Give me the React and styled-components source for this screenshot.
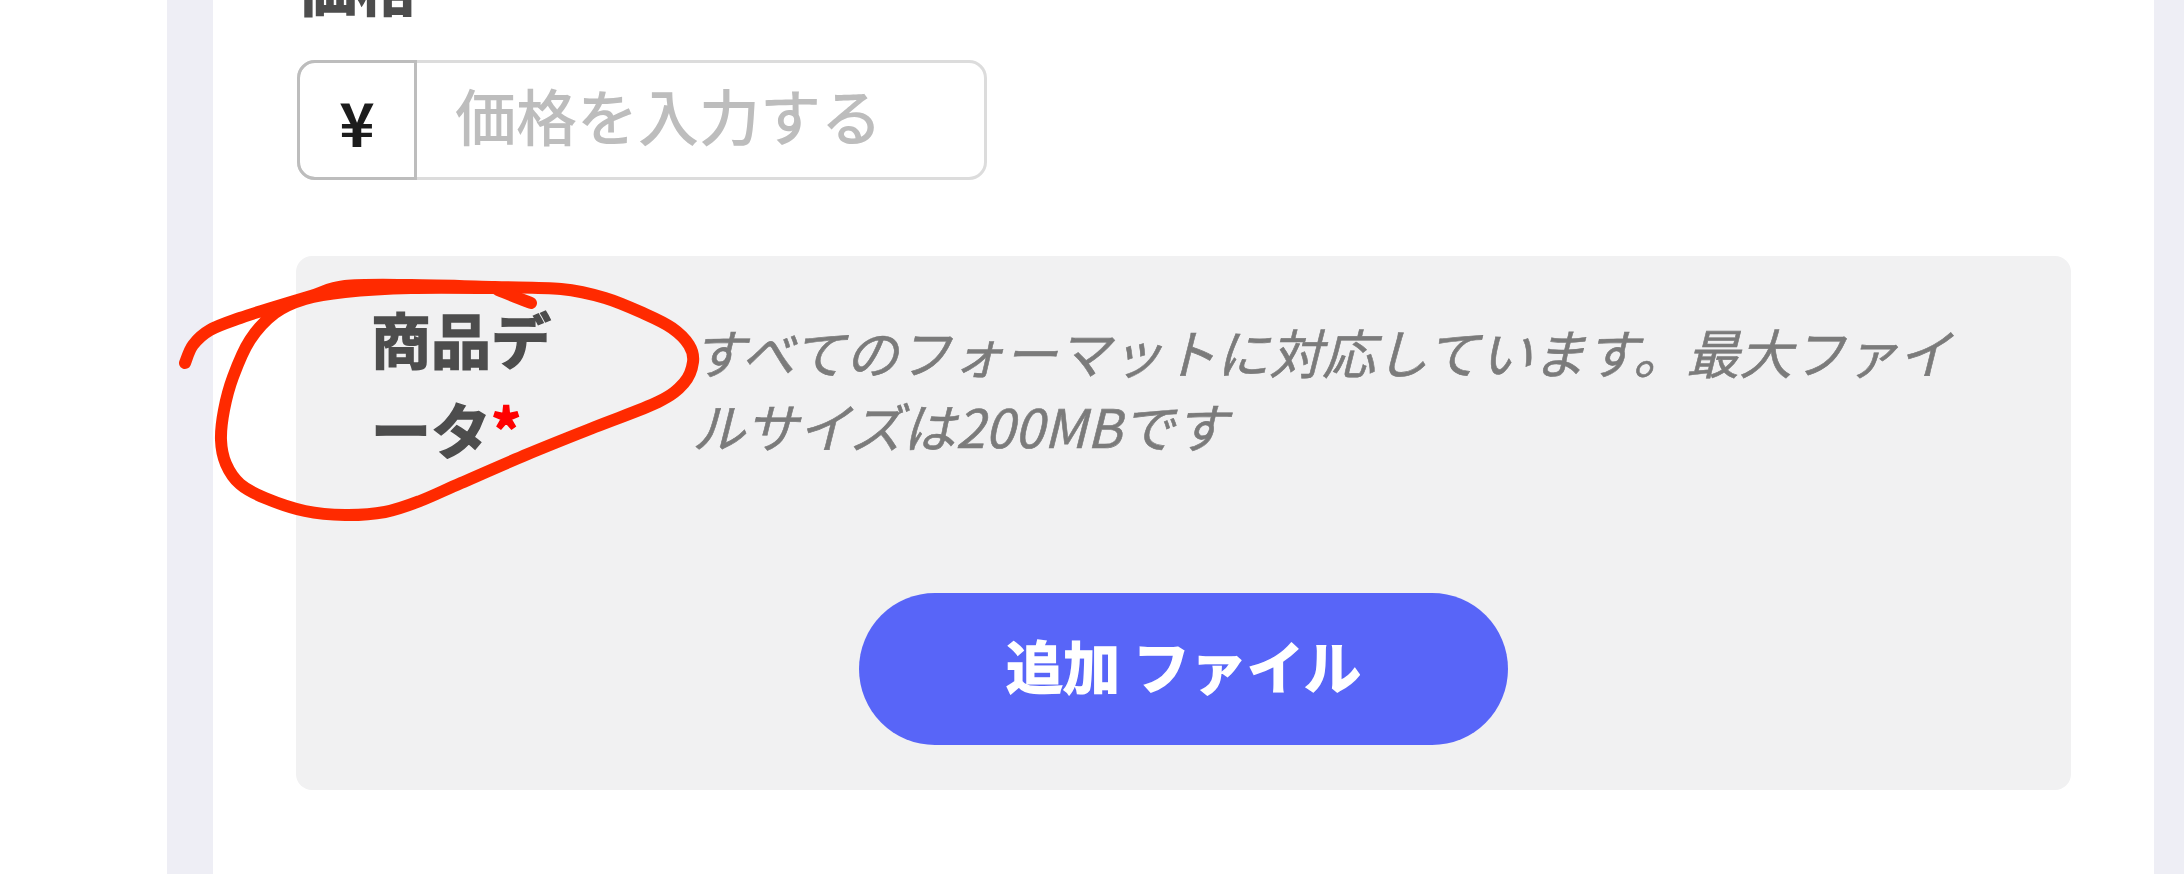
import React from 'react';
import styled, { createGlobalStyle } from 'styled-components';

const GlobalStyle = createGlobalStyle`
    html, body {
        margin: 0;
        padding: 0;
        background: #fff;
        overflow: hidden;
    }
    * { box-sizing: border-box; }
`;

// hand drawn circle round the label
const CIRCLE_POINTS = [
    [185, 363], [193, 345], [210, 330], [240, 318], [268, 309], [311, 296], [345, 286], [411, 285], [495, 287],
    [561, 289], [605, 298], [645, 314], [672, 328], [689, 345], [693, 362], [684, 383], [658, 402], [595, 427],
    [528, 454], [461, 483], [420, 501], [385, 512], [345, 515], [305, 511], [265, 498], [240, 484],
    [226, 464], [221, 440], [224, 410], [233, 377], [250, 340], [275, 313], [305, 299], [345, 292], [411, 288],
    [495, 288],
];

const toPath = (pts) => {
    let d = `M${pts[0][0]} ${pts[0][1]}`;
    for (let i = 0; i < pts.length - 1; i++) {
        const p0 = pts[i - 1] || pts[i];
        const p1 = pts[i];
        const p2 = pts[i + 1];
        const p3 = pts[i + 2] || p2;
        const c1 = [p1[0] + (p2[0] - p0[0]) / 6, p1[1] + (p2[1] - p0[1]) / 6];
        const c2 = [p2[0] - (p3[0] - p1[0]) / 6, p2[1] - (p3[1] - p1[1]) / 6];
        d += ` C${c1[0]} ${c1[1]} ${c2[0]} ${c2[1]} ${p2[0]} ${p2[1]}`;
    }
    return d;
};

const App = () => {
    return (
        <React.Fragment>
            <GlobalStyle />
            <Page>
                <Panel>
                    <FieldLabel>価格</FieldLabel>
                    <PriceInput>
                        <Addon>¥</Addon>
                        <Placeholder>価格を入力する</Placeholder>
                    </PriceInput>
                    <UploadBox>
                        <UploadHead>
                            <UploadLabel>
                                商品デ<br />ータ<Required>*</Required>
                            </UploadLabel>
                            <UploadNote>
                                すべてのフォーマットに対応しています。最大ファイ<br />ルサイズは200MBです
                            </UploadNote>
                        </UploadHead>
                        <AddButton>追加 ファイル</AddButton>
                    </UploadBox>
                </Panel>
                <Scribble viewBox="0 0 2184 874">
                    <path d={toPath(CIRCLE_POINTS)} />
                    <path d="M498 290 C510 295 521 299 531 303" />
                </Scribble>
            </Page>
        </React.Fragment>
    );
};

export default App;

const Page = styled.div`
    position: relative;
    width: 2184px;
    height: 874px;
    overflow: hidden;
    padding: 0 30px 0 167px;
    background: linear-gradient(to right, #fff 167px, #eeeef5 167px);
    font-family: "Noto Sans CJK JP", "Noto Sans", sans-serif;
`;

const Panel = styled.div`
    display: flow-root;
    margin-left: 46px;
    width: 1941px;
    height: 874px;
    padding-left: 84px;
    background: #fff;
`;

const FieldLabel = styled.div`
    height: 60px;
    margin: -45px 0 45px;
    font-size: 60px;
    font-weight: 700;
    line-height: 60px;
    color: #4d4d4d;
    -webkit-text-stroke: 1.5px #4d4d4d;
`;

const PriceInput = styled.div`
    display: flex;
    width: 690px;
    height: 120px;
    border: 3px solid #dcdcdc;
    border-radius: 18px;
`;

const Addon = styled.div`
    display: flex;
    align-items: center;
    justify-content: center;
    width: 120px;
    margin: -3px 0 -3px -3px;
    border: 3px solid #bdbdbd;
    border-radius: 18px 0 0 18px;
    font-size: 60px;
    font-weight: 700;
    color: #1c1c1c;
`;

const Placeholder = styled.div`
    display: flex;
    align-items: center;
    padding: 0 0 11px 38px;
    font-size: 61px;
    font-weight: 500;
    color: #bdbdbd;
`;

const UploadBox = styled.div`
    width: 1775px;
    height: 534px;
    margin-top: 76px;
    margin-left: -1px;
    padding-top: 37px;
    background: #f1f1f2;
    border-radius: 16px;
`;

const UploadHead = styled.div`
    display: flex;
    height: 300px;
`;

const UploadLabel = styled.div`
    width: 396px;
    padding-left: 75px;
    font-size: 60px;
    font-weight: 700;
    line-height: 90px;
    color: #4d4d4d;
    -webkit-text-stroke: 1.5px #4d4d4d;
`;

const Required = styled.span`
    color: #f00;
    -webkit-text-stroke: 1.5px #f00;
`;

const UploadNote = styled.div`
    padding-top: 21px;
    font-size: 53px;
    font-style: italic;
    line-height: 74px;
    color: #7b7b7b;
    -webkit-text-stroke: 0.6px #7b7b7b;
    white-space: nowrap;
`;

const AddButton = styled.div`
    display: flex;
    align-items: center;
    justify-content: center;
    width: 649px;
    height: 152px;
    margin-left: 563px;
    padding-bottom: 10px;
    border-radius: 76px;
    background: #5865f8;
    font-size: 57px;
    font-weight: 700;
    color: #fff;
    -webkit-text-stroke: 1.5px #fff;
`;

const Scribble = styled.svg`
    position: absolute;
    left: 0;
    top: 0;
    width: 2184px;
    height: 874px;
    pointer-events: none;

    path {
        fill: none;
        stroke: #ff2a00;
        stroke-width: 12;
        stroke-linecap: round;
        stroke-linejoin: round;
    }
`;
